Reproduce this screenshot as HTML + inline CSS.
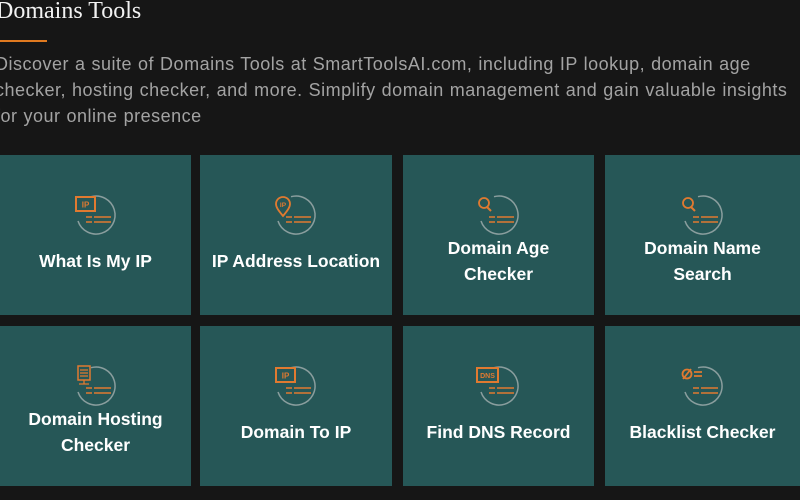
<!DOCTYPE html>
<html><head><meta charset="utf-8"><style>
body{margin:0;width:800px;height:500px;background:#161616;overflow:hidden;font-family:"Liberation Sans",sans-serif;position:relative}
h1{position:absolute;left:-4px;top:-2px;margin:0;font-family:"Liberation Serif",serif;font-weight:normal;font-size:24px;color:#f2f2f2}
.bar{position:absolute;left:0;top:40px;width:47px;height:2px;background:#e07a20}
p{position:absolute;left:-5px;top:51px;margin:0;width:800px;font-size:18px;line-height:26px;color:#a3a3a3;letter-spacing:0.5px;word-spacing:0.5px}
.c{position:absolute;width:191px;height:160px;background:#265757;color:#fff;font-weight:bold;font-size:17.5px;text-align:center;line-height:26px}
.c svg{position:absolute;left:50%;top:30px;margin-left:-30px}
.t{position:absolute;left:0;right:0}
</style></head><body>
<h1>Domains Tools</h1><div class="bar"></div>
<p>Discover a suite of Domains Tools at SmartToolsAI.com, including IP lookup, domain age checker, hosting checker, and more. Simplify domain management and gain valuable insights for your online presence</p>
<svg width="0" height="0" style="position:absolute"><defs>
<g id="base"><path d="M12 36 A19 19 0 1 0 25 11.7" fill="none" stroke="#8a9e9e" stroke-width="1.5"/><path d="M20 32h25M20 37h25" stroke="#e07a30" stroke-width="1.6" stroke-dasharray="6 2 17"/></g>
</defs></svg>
<div class="c" style="left:0;top:155px"><svg width="60" height="60"><use href="#base"/><rect x="10" y="12" width="19" height="14" fill="none" stroke="#e07a30" stroke-width="2"/><text x="19.5" y="22.5" font-size="8" fill="#e07a30" text-anchor="middle" font-weight="bold">IP</text></svg><div class="t" style="top:93px">What Is My IP</div></div>
<div class="c" style="left:200px;top:155px;width:192px"><svg width="60" height="60"><use href="#base"/><path d="M17 31c-5-6-7-9-7-12a7 7 0 0 1 14 0c0 3-2 6-7 12z" fill="none" stroke="#e07a30" stroke-width="1.8"/><text x="17" y="22" font-size="6.5" fill="#e07a30" text-anchor="middle" font-weight="bold">IP</text></svg><div class="t" style="top:93px">IP Address Location</div></div>
<div class="c" style="left:403px;top:155px"><svg width="60" height="60"><use href="#base"/><circle cx="15" cy="18" r="5" fill="none" stroke="#e07a30" stroke-width="1.8"/><path d="M18 22l4 4" stroke="#e07a30" stroke-width="2"/></svg><div class="t" style="top:80px">Domain Age<br>Checker</div></div>
<div class="c" style="left:605px;top:155px;width:195px"><svg width="60" height="60"><use href="#base"/><circle cx="15" cy="18" r="5" fill="none" stroke="#e07a30" stroke-width="1.8"/><path d="M18 22l4 4" stroke="#e07a30" stroke-width="2"/></svg><div class="t" style="top:80px">Domain Name<br>Search</div></div>
<div class="c" style="left:0;top:326px"><svg width="60" height="60"><use href="#base"/><rect x="12" y="10" width="12" height="14" fill="none" stroke="#e07a30" stroke-width="1.5"/><path d="M14 14h8M14 17h8M14 20h8M18 24v4M13 28h10" stroke="#e07a30" stroke-width="1.3"/></svg><div class="t" style="top:80px">Domain Hosting<br>Checker</div></div>
<div class="c" style="left:200px;top:326px;width:192px"><svg width="60" height="60"><use href="#base"/><rect x="10" y="12" width="19" height="14" fill="none" stroke="#e07a30" stroke-width="2"/><text x="19.5" y="22.5" font-size="8" fill="#e07a30" text-anchor="middle" font-weight="bold">IP</text></svg><div class="t" style="top:93px">Domain To IP</div></div>
<div class="c" style="left:403px;top:326px"><svg width="60" height="60"><use href="#base"/><rect x="8" y="12" width="21" height="14" fill="none" stroke="#e07a30" stroke-width="2"/><text x="18.5" y="22" font-size="7" fill="#e07a30" text-anchor="middle" font-weight="bold">DNS</text></svg><div class="t" style="top:93px">Find DNS Record</div></div>
<div class="c" style="left:605px;top:326px;width:195px"><svg width="60" height="60"><use href="#base"/><circle cx="14" cy="18" r="4.5" fill="none" stroke="#e07a30" stroke-width="1.8"/><path d="M10 23l8-10M21 16h8M21 20h8" stroke="#e07a30" stroke-width="1.8"/></svg><div class="t" style="top:93px">Blacklist Checker</div></div>
</body></html>
